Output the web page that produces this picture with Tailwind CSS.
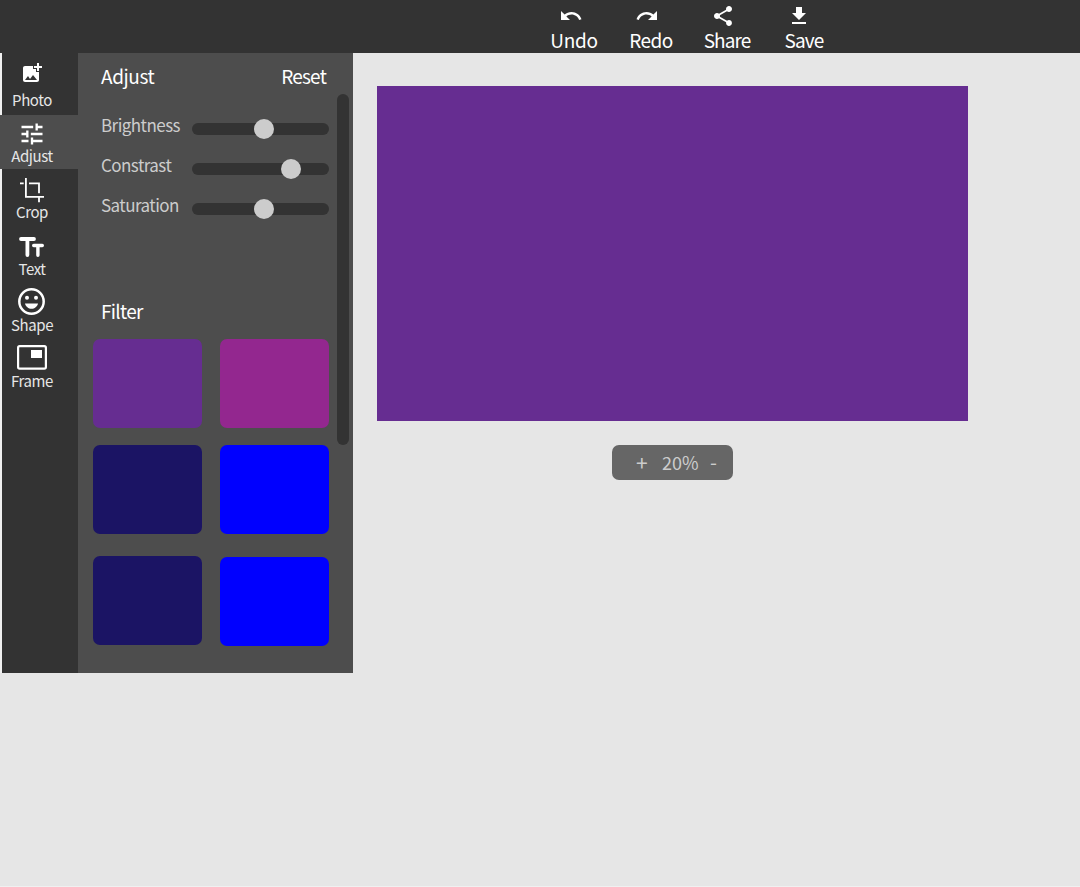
<!DOCTYPE html>
<html lang="en">
<head>
<meta charset="utf-8">
<title>Photo editor</title>
<script src="https://cdn.jsdelivr.net/npm/@tailwindcss/browser@4"></script>
</head>
<body class="h-[887px] overflow-hidden bg-[#e6e6e6] font-['Noto_Sans_CJK_SC','Open_Sans',sans-serif] font-normal text-white border-b border-[#f0f0f0]">
<header class="h-[53px] bg-[#333333] pl-[545px] pt-1 flex text-[19px] leading-6">
  <button class="w-[58px] flex flex-col items-start">
    <svg class="size-6 ml-[14px]" viewBox="0 0 24 24" fill="currentColor"><path d="M12.5 8c-2.65 0-5.05.99-6.9 2.6L2 7v9h9l-3.62-3.62c1.39-1.16 3.16-1.88 5.12-1.88 3.54 0 6.55 2.31 7.6 5.5l2.37-.78C21.08 11.03 17.15 8 12.5 8z"/></svg>
    <span class="w-full text-center tracking-[-0.3px]">Undo</span>
  </button>
  <button class="w-[58px] ml-[19px] flex flex-col items-start">
    <svg class="size-6 ml-[13px]" viewBox="0 0 24 24" fill="currentColor"><path d="M18.4 10.6C16.55 8.99 14.15 8 11.5 8c-4.65 0-8.58 3.03-9.96 7.22L3.9 16c1.05-3.19 4.05-5.5 7.6-5.5 1.95 0 3.73.72 5.12 1.88L13 16h9V7l-3.6 3.6z"/></svg>
    <span class="w-full text-center tracking-[-0.5px]">Redo</span>
  </button>
  <button class="w-[58px] ml-[18px] flex flex-col items-start">
    <svg class="size-6 ml-[13px]" viewBox="0 0 24 24" fill="currentColor"><path d="M18 16.08c-.76 0-1.44.3-1.96.77L8.91 12.7c.05-.23.09-.46.09-.7s-.04-.47-.09-.7l7.05-4.11c.54.5 1.25.81 2.04.81 1.66 0 3-1.34 3-3s-1.34-3-3-3-3 1.34-3 3c0 .24.04.47.09.7L8.04 9.81C7.5 9.31 6.79 9 6 9c-1.66 0-3 1.34-3 3s1.34 3 3 3c.79 0 1.5-.31 2.04-.81l7.12 4.16c-.05.21-.08.43-.08.65 0 1.61 1.31 2.92 2.92 2.92s2.92-1.31 2.92-2.92-1.31-2.92-2.92-2.92z"/></svg>
    <span class="w-full text-center tracking-[-0.9px]">Share</span>
  </button>
  <button class="w-[58px] ml-[19px] flex flex-col items-start">
    <svg class="size-6 ml-[12px]" viewBox="0 0 24 24" fill="currentColor"><path d="M19 9h-4V3H9v6H5l7 7 7-7zM5 18v2h14v-2H5z"/></svg>
    <span class="w-full text-center tracking-[-0.9px]">Save</span>
  </button>
</header>
<main class="flex items-start">
  <nav class="w-[78px] h-[620px] flex flex-col bg-[#333333] text-[15px] leading-5 tracking-[-0.4px] text-[#e6e6e6]">
    <button class="h-[62px] border-l-2 border-[#f0f0f0] pr-4 flex flex-col items-center">
      <svg class="size-6 mt-2 text-white" viewBox="0 0 24 24" fill="currentColor"><path d="M19 7v2.99s-1.99.01-2 0V7h-3s.01-1.99 0-2h3V2h2v3h3v2h-3zm-3 4V8h-3V5H5c-1.1 0-2 .9-2 2v12c0 1.1.9 2 2 2h12c1.1 0 2-.9 2-2v-8h-3zM5 19l3-4 2 3 3-4 4 5H5z"/></svg>
      <span class="mt-[5px]">Photo</span>
    </button>
    <button class="h-[54px] bg-[#4d4d4d] pl-[2px] pr-4 flex flex-col items-center">
      <svg class="size-7 mt-[5px] text-white" viewBox="0 0 24 24" fill="currentColor"><path d="M3 17v2h6v-2H3zM3 5v2h10V5H3zm10 16v-2h8v-2h-8v-2h-2v6h2zM7 9v2H3v2h4v2h2V9H7zm14 4v-2H11v2h10zm-6-4h2V7h4V5h-4V3h-2v6z"/></svg>
      <span class="-mt-[2px]">Adjust</span>
    </button>
    <div class="flex-1 border-l-2 border-[#f0f0f0] pr-4 flex flex-col">
      <button class="h-[56px] flex flex-col items-center">
        <svg class="w-6 h-[25px] mt-[9px] text-white" viewBox="0 0 24 25" fill="none" stroke="currentColor" stroke-width="1.8"><path d="M0 5.4H3.7M5.9 0V18.9H24M9 5.4H19V15.3M19 19V24.2"/></svg>
        <span class="-mt-[1px]">Crop</span>
      </button>
      <button class="h-[57px] flex flex-col items-center">
        <svg class="w-[25px] h-5 mt-3 mr-[1px] text-white" viewBox="0 0 25 20" fill="none" stroke="currentColor" stroke-linecap="round"><path d="M2 2H15M8.4 2.5V18" stroke-width="3.8"/><path d="M14.7 8.5H23.3M18.9 9V18.2" stroke-width="3.4"/></svg>
        <span class="mt-[2px]">Text</span>
      </button>
      <button class="h-[56px] flex flex-col items-center">
        <svg class="size-[27px] mt-[6px] mr-[1px] text-white" viewBox="0 0 27 27" fill="currentColor"><circle cx="13.5" cy="13.5" r="12.2" fill="none" stroke="currentColor" stroke-width="2.5"/><circle cx="9" cy="9.8" r="2"/><circle cx="18" cy="9.8" r="2"/><path d="M7 15.5H20C19.2 18.7 16.6 20.8 13.5 20.8S7.8 18.7 7 15.5Z"/></svg>
        <span>Shape</span>
      </button>
      <button class="h-[56px] flex flex-col items-center">
        <svg class="w-[30px] h-[25px] mt-[7px] text-white" viewBox="0 0 30 25" fill="currentColor"><rect x="1.1" y="1.1" width="27.8" height="22.6" rx="1.6" fill="none" stroke="currentColor" stroke-width="2.2"/><rect x="14" y="5" width="11" height="8"/></svg>
        <span class="mt-[1px]">Frame</span>
      </button>
    </div>
  </nav>
  <section class="w-[275px] h-[620px] bg-[#4d4d4d] flex">
    <div class="w-[251px] pl-[15px] flex flex-col">
      <div class="h-6 mt-[11px] pl-2 pr-[3px] flex justify-between text-[19px] leading-6"><h2 class="tracking-[-0.4px]">Adjust</h2><button class="tracking-[-0.8px]">Reset</button></div>
      <div class="mt-[21px] pl-2 flex flex-col text-[17px] leading-10 tracking-[-0.55px] text-[#cccccc]">
        <label class="h-10 flex"><span class="w-[91px] -mt-[4px]">Brightness</span>
          <span class="w-[137px] h-3 mt-[14px] bg-[#333333] rounded-full flex items-center pl-[62px]"><i class="size-5 rounded-full bg-[#cccccc]"></i></span></label>
        <label class="h-10 flex"><span class="w-[91px] -mt-[4px]">Constrast</span>
          <span class="w-[137px] h-3 mt-[14px] bg-[#333333] rounded-full flex items-center pl-[89px]"><i class="size-5 rounded-full bg-[#cccccc]"></i></span></label>
        <label class="h-10 flex"><span class="w-[91px] -mt-[4px]">Saturation</span>
          <span class="w-[137px] h-3 mt-[14px] bg-[#333333] rounded-full flex items-center pl-[62px]"><i class="size-5 rounded-full bg-[#cccccc]"></i></span></label>
      </div>
      <h2 class="mt-[70px] pl-2 text-[19px] leading-6 tracking-[-0.7px]">Filter</h2>
      <div class="mt-[16px] flex gap-[18px]">
        <div class="w-[109px] flex flex-col">
          <div class="h-[89px] rounded-[7px] bg-[#662d91]"></div>
          <div class="h-[89px] mt-[17px] rounded-[7px] bg-[#1b1464]"></div>
          <div class="h-[89px] mt-[22px] rounded-[7px] bg-[#1b1464]"></div>
        </div>
        <div class="w-[109px] flex flex-col">
          <div class="h-[89px] rounded-[7px] bg-[#93278f]"></div>
          <div class="h-[89px] mt-[17px] rounded-[7px] bg-[#0000ff]"></div>
          <div class="h-[89px] mt-[23px] rounded-[7px] bg-[#0000ff]"></div>
        </div>
      </div>
    </div>
    <div class="w-3 h-[351px] ml-2 mt-[41px] rounded-full bg-[#333333]"></div>
  </section>
  <section class="ml-6 mt-[33px] w-[591px] flex flex-col items-center">
    <div class="w-full h-[335px] bg-[#662d91]"></div>
    <div class="mt-6 w-[121px] h-[34.5px] rounded-[7px] bg-[#666666] text-[#cccccc] text-[18px] leading-[34px] flex pl-[24px]">
      <button class="w-[26px] text-left text-[21px]">+</button><span class="w-12">20%</span><button class="text-[20px]">-</button>
    </div>
  </section>
</main>
</body>
</html>
